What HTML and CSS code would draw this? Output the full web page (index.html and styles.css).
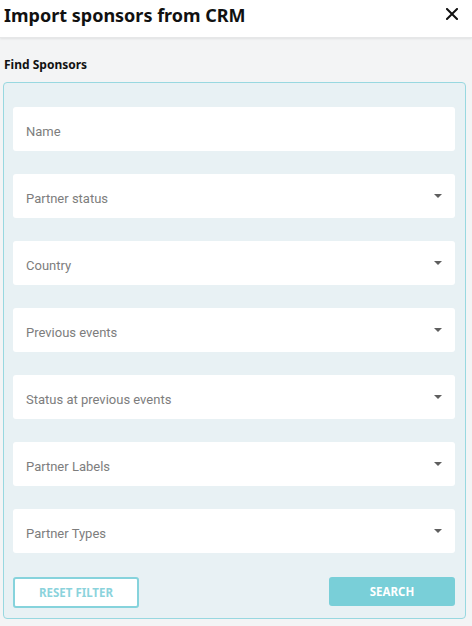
FILE: index.html
```html
<!DOCTYPE html>
<html>
<head>
<meta charset="utf-8">
<link rel="stylesheet" href="styles.css">
</head>
<body>
<header class="header">
  <h1 class="title">Import sponsors from CRM</h1>
  <button class="close" aria-label="Close">
    <svg width="12" height="12" viewBox="0 0 12 12"><path d="M1 1L11 11M11 1L1 11" stroke="#111" stroke-width="2" stroke-linecap="square"/></svg>
  </button>
</header>
<main class="content">
  <h2 class="section-title">Find Sponsors</h2>
  <div class="panel">
    <div class="field"><span class="placeholder">Name</span></div>
    <div class="field"><span class="placeholder">Partner status</span><span class="arrow"></span></div>
    <div class="field"><span class="placeholder">Country</span><span class="arrow"></span></div>
    <div class="field"><span class="placeholder">Previous events</span><span class="arrow"></span></div>
    <div class="field"><span class="placeholder">Status at previous events</span><span class="arrow"></span></div>
    <div class="field"><span class="placeholder">Partner Labels</span><span class="arrow"></span></div>
    <div class="field"><span class="placeholder">Partner Types</span><span class="arrow"></span></div>
    <div class="actions">
      <button class="btn btn-outline">RESET FILTER</button>
      <button class="btn btn-fill">SEARCH</button>
    </div>
  </div>
</main>
</body>
</html>
```
FILE: styles.css
```css
html, body {
  margin: 0;
  padding: 0;
}
body {
  width: 472px;
  height: 626px;
  background: #f3f4f5;
  font-family: "Noto Sans", "Open Sans", sans-serif;
  overflow: hidden;
}
.header {
  height: 38px;
  background: #ffffff;
  display: flex;
  align-items: center;
  justify-content: space-between;
  padding: 0 14px 0 4px;
  box-shadow: 0 1px 2px rgba(0,0,0,0.08);
  border-bottom: 1px solid #e6e7e8;
  box-sizing: border-box;
  position: relative;
}
.title {
  margin: 0;
  font-size: 18px;
  font-weight: 700;
  color: #111;
  line-height: 1;
  margin-top: -8px;
}
.close {
  border: 0;
  background: none;
  padding: 0;
  width: 12px;
  height: 12px;
  display: flex;
  margin-top: -9px;
}
.content {
  padding: 18px 6px 0 3px;
}
.section-title {
  margin: 0 0 9px 1px;
  font-size: 12px;
  font-weight: 700;
  color: #111;
  line-height: 17px;
}
.panel {
  width: 463px;
  height: 537px;
  box-sizing: border-box;
  background: #e8f1f4;
  border: 1px solid #98d8e0;
  border-radius: 4px;
  padding: 24px 10px 0 9px;
  display: flex;
  flex-direction: column;
  gap: 23px;
}
.field {
  height: 44px;
  box-sizing: border-box;
  background: #fff;
  border-radius: 3px;
  display: flex;
  align-items: center;
  justify-content: space-between;
  padding: 4px 13px 0 13px;
  flex-shrink: 0;
}
.placeholder {
  font-family: Roboto, "Noto Sans", sans-serif;
  font-size: 13px;
  color: #7d7d7d;
}
.arrow {
  width: 0;
  height: 0;
  border-left: 4px solid transparent;
  border-right: 4px solid transparent;
  border-top: 4px solid #5f5f5f;
  margin-top: -4px;
}
.actions {
  display: flex;
  justify-content: space-between;
  align-items: flex-start;
  margin-top: 1px;
}
.btn {
  width: 126px;
  font-family: "Noto Sans", sans-serif;
  font-size: 11.5px;
  font-weight: 700;
  border-radius: 3px;
  cursor: pointer;
}
.btn-outline {
  height: 31px;
  background: #fff;
  border: 2px solid #86d3dc;
  color: #8bd3dc;
}
.btn-fill {
  height: 29px;
  background: #79cfd8;
  border: 0;
  color: #fff;
}
```
